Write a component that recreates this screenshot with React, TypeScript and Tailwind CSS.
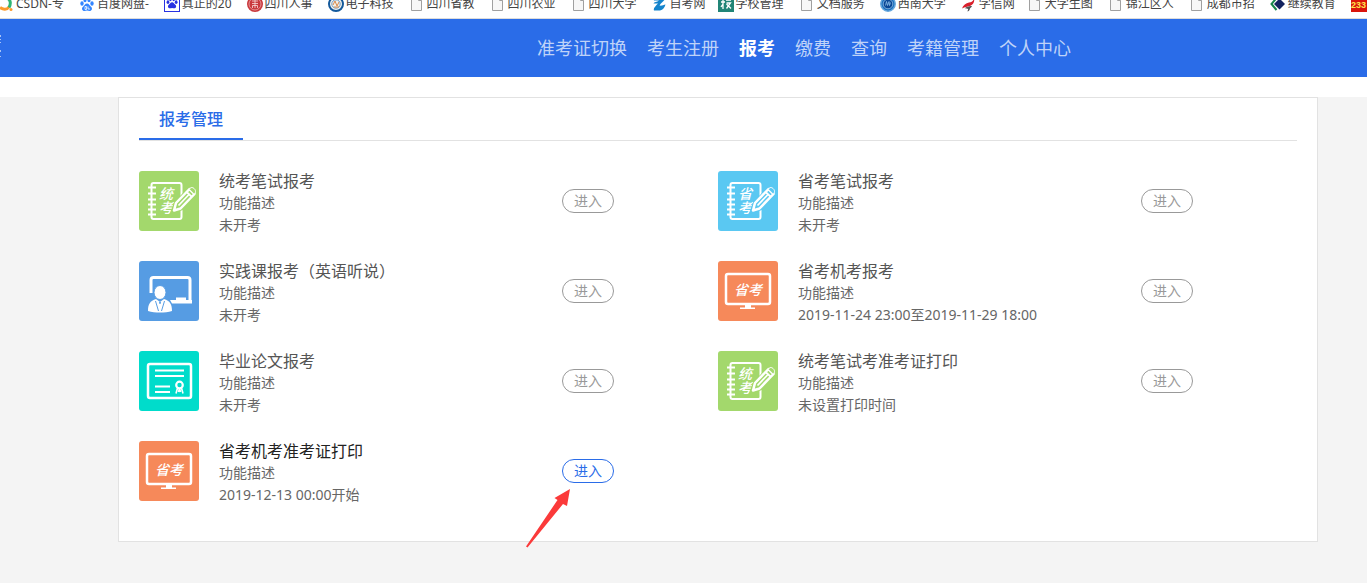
import React from "react";

type TileKind = "tongkao" | "shengkao" | "teacher" | "computer" | "thesis";

const navItems = ["准考证切换", "考生注册", "报考", "缴费", "查询", "考籍管理", "个人中心"];

const bookmarks = [
  { icon: "csdn", title: "CSDN-专" },
  { icon: "paw", title: "百度网盘-" },
  { icon: "pawBox", title: "真正的20" },
  { icon: "red", title: "四川人事" },
  { icon: "uestc", title: "电子科技" },
  { icon: "page", title: "四川省教" },
  { icon: "page", title: "四川农业" },
  { icon: "page", title: "四川大学" },
  { icon: "zk", title: "自考网", short: true },
  { icon: "school", title: "学校管理" },
  { icon: "page", title: "文档服务" },
  { icon: "swu", title: "西南大学" },
  { icon: "chsi", title: "学信网", short: true },
  { icon: "page", title: "大学生图" },
  { icon: "page", title: "锦江区人" },
  { icon: "page", title: "成都市招" },
  { icon: "diamond", title: "继续教育" },
  { icon: "game", title: "" },
];

const exams: { kind: TileKind; title: string; time: string; open?: boolean }[] = [
  { kind: "tongkao", title: "统考笔试报考", time: "未开考" },
  { kind: "shengkao", title: "省考笔试报考", time: "未开考" },
  { kind: "teacher", title: "实践课报考（英语听说）", time: "未开考" },
  { kind: "computer", title: "省考机考报考", time: "2019-11-24 23:00至2019-11-29 18:00" },
  { kind: "thesis", title: "毕业论文报考", time: "未开考" },
  { kind: "tongkao", title: "统考笔试考准考证打印", time: "未设置打印时间" },
  { kind: "computer", title: "省考机考准考证打印", time: "2019-12-13 00:00开始", open: true },
];

const Paw = ({ color }: { color: string }) => (
  <g fill={color}>
    <ellipse cx="3" cy="7.5" rx="1.7" ry="2.2" />
    <ellipse cx="6" cy="4" rx="1.6" ry="2.3" />
    <ellipse cx="10" cy="4" rx="1.6" ry="2.3" />
    <ellipse cx="13" cy="7.5" rx="1.7" ry="2.2" />
    <path d="M8 7.5c2 0 2.6 2 4 3.2 1.800 1.500 1 4.300-1.500 4.300-1 0-1.500-.4-2.500-.4s-1.500.4-2.500.4C3 15 2.200 12.200 4 10.700 5.400 9.500 6 7.500 8 7.500z" />
  </g>
);

const BookmarkIcon = ({ icon }: { icon: string }) => (
  <svg className="h-4 w-4 shrink-0" viewBox="0 0 16 16" aria-hidden="true">
    {icon === "csdn" && (
      <g fill="none" strokeWidth="3">
        <path d="M2 11.500c3 2.500 7 2.500 9-.5" stroke="#fb9a2c" />
        <path d="M9 2c4 2 4 6 2 9.500" stroke="#2fb574" />
        <circle cx="13" cy="13.500" r="1.500" fill="#fb9a2c" stroke="none" />
      </g>
    )}
    {icon === "paw" && (
      <>
        <Paw color="#3385ff" />
        <path d="M6 10.500h1.500v3H6zM9 10.500v2.500h2" stroke="#fff" strokeWidth=".8" fill="none" />
      </>
    )}
    {icon === "pawBox" && (
      <>
        <rect x=".5" y=".5" width="15" height="15" fill="#fff" stroke="#2932e1" />
        <g transform="translate(1.500 0) scale(.82)">
          <Paw color="#2932e1" />
        </g>
      </>
    )}
    {icon === "red" && (
      <>
        <circle cx="8" cy="8" r="8" fill="#c9393d" />
        <circle cx="8" cy="8" r="6" fill="none" stroke="#eba6a6" strokeWidth=".8" />
        <path d="M5 5h6M5 7.500h6M8 4v8M5.500 12V9.500h5V12" stroke="#f7dada" fill="none" strokeWidth=".8" />
      </>
    )}
    {icon === "uestc" && (
      <>
        <circle cx="8" cy="8" r="7" fill="#f4f1ea" stroke="#14599b" strokeWidth="2" />
        <circle cx="8" cy="8" r="4.200" fill="none" stroke="#6f9cc4" />
        <path d="M5 9l2-4 2 5 2-4M6 11h5" stroke="#d88a4b" fill="none" />
      </>
    )}
    {icon === "page" && (
      <path d="M2.500 1.500h7l3 3v10h-10zM9.500 1.500v3h3" fill="#f7f7f7" stroke="#a0a0a0" />
    )}
    {icon === "zk" && (
      <path d="M1 2h12.500c-1 3-4 4-6 7.500 2 .5 4-.5 6-1-1 3-2.500 5.500-5.500 6H2c-1-2 1.500-4.500 4-7H1.500C2 6 5 6 7 4.500H2z" fill="#1484cc" />
    )}
    {icon === "school" && (
      <>
        <path fill="#218577" d="M0 0h16v16H0z" />
        <path d="M5 3v10M3 6h4M5 8l-2 3M8 4h5M8.500 7h4l-4 5.500M8.500 8l4.500 4.500" stroke="#fff" fill="none" strokeWidth="1.300" />
      </>
    )}
    {icon === "swu" && (
      <>
        <circle cx="8" cy="8" r="7.200" fill="#1c6fbd" stroke="#64a6dc" strokeWidth="1.500" />
        <circle cx="8" cy="8" r="4.800" fill="#0a4795" stroke="#a3cceb" strokeWidth=".7" />
        <path d="M5.500 9.500l1-4 1 4 1.500-4 .5 4 1-3" stroke="#8ec0e8" fill="none" strokeWidth=".8" />
      </>
    )}
    {icon === "chsi" && (
      <>
        <path d="M13 2C12.500 5 11 6 8 6.500S2 9 1 12.500c3-2 5-1.500 8-2.500s5-4 4-8z" fill="#d9202c" />
        <path d="M4 12c2-1.500 5-2 7-2-1 2-2 2-2 2.500s-.5 2.500-2.500 3c0-1 1-2 .5-2.500s-2 0-3-1z" fill="#555" />
      </>
    )}
    {icon === "diamond" && (
      <>
        <path d="M6.500 2L1.500 8l5 6" stroke="#16854a" strokeWidth="2" fill="none" />
        <path d="M9.500 2.500l5.500 5.500-5.500 5.500L4 8z" fill="#12235f" />
      </>
    )}
    {icon === "game" && (
      <>
        <path fill="#d9140c" d="M0 0h16v16H0z" />
        <text x="0" y="12" fontSize="9" fontWeight="700" fontFamily="Liberation Sans, sans-serif" fill="#ffe34d">
          233
        </text>
      </>
    )}
  </svg>
);

const Notebook = ({ color, chars }: { color: string; chars: string }) => (
  <>
    <rect width="60" height="60" rx="3" fill={color} />
    <rect x="12.500" y="12" width="30" height="36" rx="2" fill="none" stroke="#fff" strokeWidth="2" />
    <path d="M9 16.500h8M9 22.500h8M9 28.500h8M9 33.500h8M9 38.500h8M9 43.500h8" stroke="#fff" strokeWidth="2" />
    <text
      x="27"
      y="16"
      writingMode="vertical-rl"
      fill="#fff"
      fontFamily="'Noto Sans CJK SC', sans-serif"
      fontSize="14"
      fontStyle="italic"
      fontWeight="500"
    >
      {chars}
    </text>
    <path d="M37 33L51 18l5 5-14 14-7 2z" fill={color} stroke={color} strokeWidth="5" />
    <path
      d="M37 32L50.500 18l5 5L41.500 37.500 35 39.500z"
      fill={color}
      stroke="#fff"
      strokeWidth="2.500"
      strokeLinejoin="round"
    />
    <path d="M39.500 34.500L49.500 24M47 20.500l6 5.500" stroke="#fff" strokeWidth="1.800" />
    <path d="M50.500 18c2-4 8.500 1 5 5" fill={color} stroke="#fff" />
  </>
);

const ExamTile = ({ kind }: { kind: TileKind }) => (
  <svg className="h-[60px] w-[60px] shrink-0" viewBox="0 0 60 60" aria-hidden="true">
    {kind === "tongkao" && <Notebook color="#a3d86c" chars="统考" />}
    {kind === "shengkao" && <Notebook color="#5ac8f2" chars="省考" />}
    {kind === "teacher" && (
      <>
        <rect width="60" height="60" rx="3" fill="#569ce3" />
        <path d="M12 32V19a2.500 2.500 0 0 1 2.500-2.500h34A2.500 2.500 0 0 1 51 19v21" fill="none" stroke="#fff" strokeWidth="3" />
        <path d="M31 39h22v3.500H33zM37 36.500h10V39H37z" fill="#fff" />
        <ellipse cx="21" cy="31.500" rx="6" ry="7" fill="#fff" stroke="#569ce3" />
        <path d="M9 50c0-7 2-10 8-12l4 3 4-3c6 2 8 5 8 12-7 2-17 2-24 0z" fill="#fff" />
        <path d="M16.500 40l3 10M25.500 40l-3 10" stroke="#569ce3" fill="none" />
        <path d="M20 41h2l-.5 2h-1z" fill="#569ce3" />
      </>
    )}
    {kind === "computer" && (
      <>
        <rect width="60" height="60" rx="3" fill="#f6895a" />
        <rect x="8" y="13" width="44" height="30" rx="2" fill="none" stroke="#fff" strokeWidth="2.500" />
        <path d="M27 44h6v2.500h4V48H22v-1.500h5z" fill="#fff" />
        <text
          x="30"
          y="34"
          fill="#fff"
          fontFamily="'Noto Sans CJK SC', sans-serif"
          fontSize="14"
          fontStyle="italic"
          fontWeight="500"
          textAnchor="middle"
        >
          省考
        </text>
      </>
    )}
    {kind === "thesis" && (
      <>
        <rect width="60" height="60" rx="3" fill="#00dccb" />
        <rect x="9" y="13" width="43" height="34" rx="2" fill="none" stroke="#fff" strokeWidth="2.500" />
        <path d="M16 19.500h29M16 25h29M16 35.500h15M16 41h15" stroke="#fff" strokeWidth="2" />
        <circle cx="40.500" cy="34" r="3.300" fill="none" stroke="#fff" strokeWidth="2.200" />
        <path d="M38.500 37L37 42.500M42.500 37l1.500 5.500M40.500 37.500L39.500 41M40.500 37.500l1 3.500" stroke="#fff" strokeWidth="1.600" />
      </>
    )}
  </svg>
);

const ExamItem = ({ exam }: { exam: (typeof exams)[number] }) => (
  <li className="flex items-center gap-5 pr-[104px]">
    <ExamTile kind={exam.kind} />
    <div className="flex-1 pt-1 text-sm leading-[22px] text-[#666]">
      <h3 className={exam.open ? "text-base leading-[22px] text-[#222]" : "text-base leading-[22px] text-[#555]"}>
        {exam.title}
      </h3>
      <p>功能描述</p>
      <p>{exam.time}</p>
    </div>
    <div className="relative">
      <button
        type="button"
        className={
          exam.open
            ? "block h-6 w-[52px] rounded-full border border-[#2a6ce8] text-sm leading-[22px] text-[#2a6ce8]"
            : "block h-6 w-[52px] rounded-full border border-[#999] text-sm leading-[22px] text-[#999]"
        }
      >
        进入
      </button>
      {exam.open && (
        <svg className="absolute top-7 -left-9 h-[62px] w-[46px]" viewBox="0 0 46 62" aria-hidden="true">
          <path d="M44 2L28.500 11l3 2L0 59.500 1.500 60.500 37 17l4 2z" fill="#fb3a3a" />
        </svg>
      )}
    </div>
  </li>
);

const App = () => {
  return (
    <div className="flex min-h-screen flex-col bg-[#f4f4f4] font-['Noto_Sans','Noto_Sans_CJK_SC',sans-serif]">
      <div className="h-[19px] overflow-hidden border-b border-[#dcdcdc] bg-white">
        <div className="-mt-1 -ml-0.5 flex h-4">
          {bookmarks.map((b, i) => (
            <a
              key={i}
              href="#"
              aria-label={b.title || "233"}
              className={
                b.short
                  ? "flex w-[66px] shrink-0 items-center gap-0.5 text-xs leading-4 whitespace-nowrap text-[#444]"
                  : "flex shrink-0 items-center gap-0.5 pr-[15px] text-xs leading-4 whitespace-nowrap text-[#444]"
              }
            >
              <BookmarkIcon icon={b.icon} />
              {b.title}
            </a>
          ))}
        </div>
      </div>

      <header className="flex h-[58px] items-center justify-between bg-[#2a6ce8] pr-[296px]">
        {/* tail of the site logo */}
        <svg className="h-7 w-px" viewBox="0 0 1 28" aria-hidden="true">
          <path d="M.5 1v2M.5 5v1M.5 8v1M.5 16v2M.5 22v1" stroke="#a9c4f6" />
        </svg>
        <nav className="flex gap-5 text-lg leading-7">
          {navItems.map((item) => (
            <a key={item} href="#" className={item === "报考" ? "font-bold text-white" : "text-[#bfd3f8]"}>
              {item}
            </a>
          ))}
        </nav>
      </header>

      <main className="border-t-20 border-white pr-[49px] pb-10 pl-[118px]">
        <section className="border border-[#e2e2e2] bg-white px-5 pb-[35px]">
          <div className="flex h-[43px] border-b border-[#e2e2e2]">
            <h2 className="border-b-2 border-[#2a6ce8] px-5 text-base leading-[42px] font-medium text-[#2a6ce8]">
              报考管理
            </h2>
          </div>
          <ul className="grid grid-cols-2 gap-y-5 pt-[25px]">
            {exams.map((exam) => (
              <ExamItem key={exam.title} exam={exam} />
            ))}
          </ul>
        </section>
      </main>
    </div>
  );
};

export default App;
